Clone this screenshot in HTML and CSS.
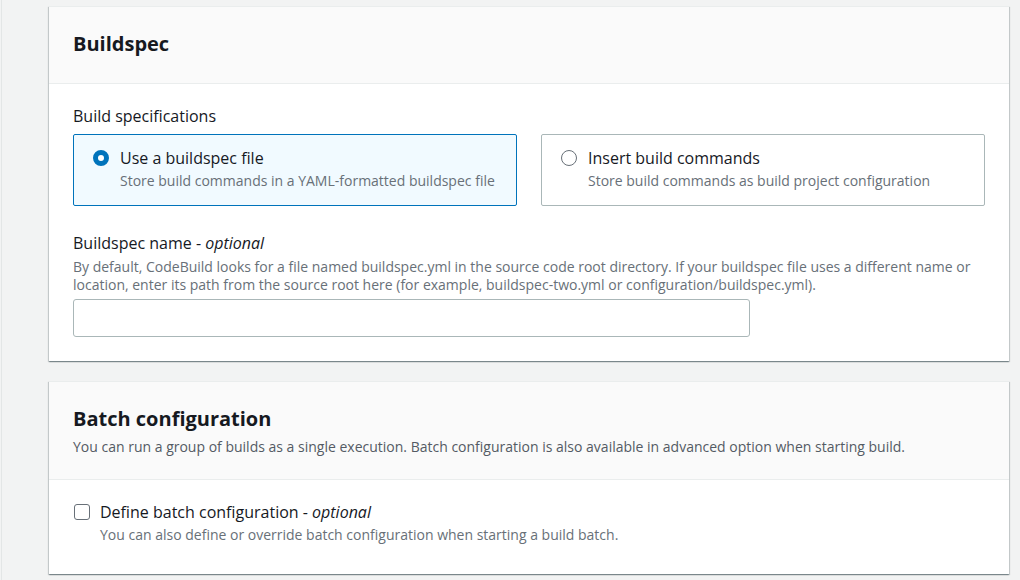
FILE: index.html
```html
<!DOCTYPE html>
<html lang="en">
<head>
<meta charset="utf-8">
<title>Buildspec</title>
<link rel="stylesheet" href="styles.css">
</head>
<body>
<main class="page">
  <section class="card card-first">
    <header class="card-header">
      <h2 class="card-title">Buildspec</h2>
    </header>
    <div class="card-body card-body-first">
      <div class="field-label">Build specifications</div>
      <div class="tiles">
        <label class="tile tile-selected">
          <span class="radio radio-on"></span>
          <span class="tile-text">
            <span class="tile-title">Use a buildspec file</span>
            <span class="tile-desc">Store build commands in a YAML-formatted buildspec file</span>
          </span>
        </label>
        <label class="tile">
          <span class="radio"></span>
          <span class="tile-text">
            <span class="tile-title">Insert build commands</span>
            <span class="tile-desc">Store build commands as build project configuration</span>
          </span>
        </label>
      </div>
      <div class="field">
        <div class="field-label">Buildspec name - <i>optional</i></div>
        <div class="field-desc">By default, CodeBuild looks for a file named buildspec.yml in the source code root directory. If your buildspec file uses a different name or location, enter its path from the source root here (for example, buildspec-two.yml or configuration/buildspec.yml).</div>
        <div class="input"></div>
      </div>
    </div>
  </section>

  <section class="card">
    <header class="card-header card-header-desc">
      <h2 class="card-title card-title-tight">Batch configuration</h2>
      <p class="header-desc">You can run a group of builds as a single execution. Batch configuration is also available in advanced option when starting build.</p>
    </header>
    <div class="card-body card-body-check">
      <label class="check-row">
        <span class="checkbox"></span>
        <span class="tile-text">
          <span class="check-title">Define batch configuration - <i>optional</i></span>
          <span class="tile-desc">You can also define or override batch configuration when starting a build batch.</span>
        </span>
      </label>
    </div>
  </section>
</main>
</body>
</html>
```

FILE: styles.css
```css
* { box-sizing: border-box; }
html, body { margin: 0; padding: 0; }
body {
  background: #f2f3f3;
  font-family: "Open Sans", "Noto Sans", sans-serif;
  color: #16191f;
  width: 1020px;
  height: 580px;
  overflow: hidden;
}
.page {
  margin-left: 1px;
  border-left: 1px solid #e3e6e6;
  padding: 6px 11px 0 47px;
  display: flex;
  flex-direction: column;
  gap: 20px;
  height: 580px;
}
.card {
  background: #fff;
  border-top: 1px solid #eaeded;
  box-shadow: 0 1px 1px 0 rgba(0, 28, 36, 0.3), 1px 1px 1px 0 rgba(0, 28, 36, 0.15), -1px 1px 1px 0 rgba(0, 28, 36, 0.15);
}
.card-header {
  background: #fafafa;
  border-bottom: 1px solid #eaeded;
  padding: 20px 24px 22px;
}
.card-header-desc {
  padding: 21px 24px 22px;
}
.card-title {
  margin: 0;
  font-size: 20px;
  font-weight: 700;
  line-height: 34px;
  color: #16191f;
}
.card-title-tight {
  line-height: 32px;
}
.header-desc {
  margin: 2px 0 0;
  font-size: 14px;
  line-height: 20px;
  color: #545b64;
}
.card-body {
  padding: 21px 24px 25px;
}
.card-body-first {
  padding-bottom: 24px;
}
.field-label {
  font-size: 16px;
  line-height: 22px;
  color: #16191f;
}
.tiles {
  margin-top: 7px;
  display: grid;
  grid-template-columns: 1fr 1fr;
  gap: 24px;
}
.tile {
  display: flex;
  align-items: flex-start;
  gap: 11px;
  height: 72px;
  padding: 12px 18px 12px 19px;
  border: 1px solid #aab7b8;
  border-radius: 2px;
  background: #fff;
}
.tile-selected {
  border-color: #0073bb;
  background: #f1faff;
}
.radio {
  flex: none;
  width: 16px;
  height: 16px;
  margin-top: 3px;
  border-radius: 50%;
  border: 1.5px solid #687078;
  background: #fff;
}
.radio-on {
  border: 5px solid #0073bb;
}
.tile-text {
  display: flex;
  flex-direction: column;
}
.tile-title, .check-title {
  font-size: 16px;
  line-height: 22px;
  color: #16191f;
}
.tile-desc {
  margin-top: 2px;
  font-size: 14px;
  line-height: 20px;
  color: #687078;
}
.field {
  margin-top: 26px;
}
.field-desc {
  margin-top: 4px;
  font-size: 14px;
  line-height: 18px;
  color: #687078;
}
.input {
  margin-top: 5px;
  width: 677px;
  height: 38px;
  border: 1px solid #aab7b8;
  border-radius: 3px;
  background: #fff;
}
.card-body-check {
  padding: 21px 24px 29px;
}
.check-row {
  display: flex;
  align-items: flex-start;
  gap: 10px;
  padding-left: 1px;
}
.checkbox {
  flex: none;
  width: 16px;
  height: 16px;
  margin-top: 3px;
  border: 1.5px solid #687078;
  border-radius: 3px;
  background: #fff;
}
```
